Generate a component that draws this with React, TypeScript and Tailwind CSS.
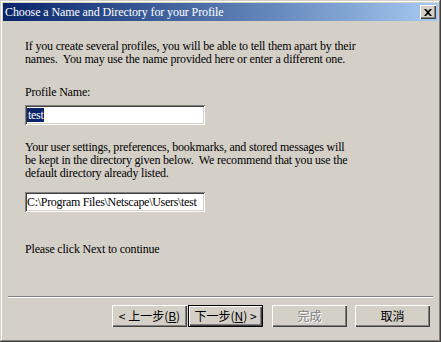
import React from 'react';

function Field({ children }: { children: React.ReactNode }) {
  return (
    <div className="w-[180px] h-[20px] bg-white shadow-[inset_1px_1px_#808080,inset_-1px_-1px_#ffffff,inset_2px_2px_#404040,inset_-2px_-2px_#d4d0c8] flex items-center pl-[2px] overflow-hidden whitespace-nowrap text-[12px] tracking-[-0.3px] text-black font-[family-name:Liberation_Serif,serif]">
      {children}
    </div>
  );
}

function Button({
  children,
  isDefault,
  disabled,
}: {
  children: React.ReactNode;
  isDefault?: boolean;
  disabled?: boolean;
}) {
  let cls =
    'w-[75px] h-[22px] flex items-center justify-center text-[12px] font-[family-name:Noto_Sans_CJK_TC,sans-serif] shadow-[inset_1px_1px_#ffffff,inset_-1px_-1px_#404040,inset_-2px_-2px_#808080]';
  if (isDefault) cls += ' border border-black';
  cls += disabled ? ' text-[#808080] [text-shadow:1px_1px_#ffffff]' : ' text-black';
  return <div className={cls}>{children}</div>;
}

export default function App() {
  return (
    <div className="w-[441px] h-[342px] bg-[#d4d0c8] p-[3px] flex flex-col shadow-[inset_-1px_-1px_#404040,inset_1px_1px_#d4d0c8,inset_-2px_-2px_#808080,inset_2px_2px_#ffffff] overflow-hidden font-[family-name:Liberation_Serif,serif]">
      <div className="h-[18px] bg-gradient-to-r from-[#0a246a] to-[#a6caf0] flex items-center pl-[2px] pr-[2px]">
        <span className="flex-1 text-white text-[12px] tracking-[-0.1px] leading-none whitespace-nowrap">
          Choose a Name and Directory for your Profile
        </span>
        <div className="w-[16px] h-[14px] bg-[#d4d0c8] shadow-[inset_1px_1px_#ffffff,inset_-1px_-1px_#404040,inset_-2px_-2px_#808080] flex items-center justify-center">
          <svg width="8" height="7" viewBox="0 0 8 7">
            <path d="M0 0h2l2 2 2-2h2L5 3.5 8 7H6L4 5 2 7H0l3-3.5z" fill="#000" />
          </svg>
        </div>
      </div>

      <div className="flex flex-col pl-[22px] text-[12px] leading-[13px] tracking-[-0.19px] text-black">
        <p className="mt-[19px]">
          If you create several profiles, you will be able to tell them apart by their
          <br />
          names.&nbsp; You may use the name provided here or enter a different one.
        </p>
        <p className="mt-[20px]">Profile Name:</p>
        <div className="mt-[6px]">
          <Field>
            <span className="bg-[#0a246a] text-white leading-[14px] px-[1px]">test</span>
          </Field>
        </div>
        <p className="mt-[16px]">
          Your user settings, preferences, bookmarks, and stored messages will
          <br />
          be kept in the directory given below.&nbsp; We recommend that you use the
          <br />
          default directory already listed.
        </p>
        <div className="mt-[12px]">
          <Field>
            <span>C:\Program Files\Netscape\Users\test</span>
          </Field>
        </div>
        <p className="mt-[31px]">Please click Next to continue</p>
      </div>

      <div className="mt-auto mb-[12px] flex flex-col">
        <div className="mx-[5px] h-[2px] border-t border-[#808080] border-b border-b-white" />
        <div className="mt-[7px] flex justify-end pr-[8px]">
          <Button>
            &lt; 上一步(<span className="underline">B</span>)
          </Button>
          <div className="ml-[1px]">
            <Button isDefault>
              下一步(<span className="underline">N</span>) &gt;
            </Button>
          </div>
          <div className="ml-[9px]">
            <Button disabled>完成</Button>
          </div>
          <div className="ml-[8px]">
            <Button>取消</Button>
          </div>
        </div>
      </div>
    </div>
  );
}
